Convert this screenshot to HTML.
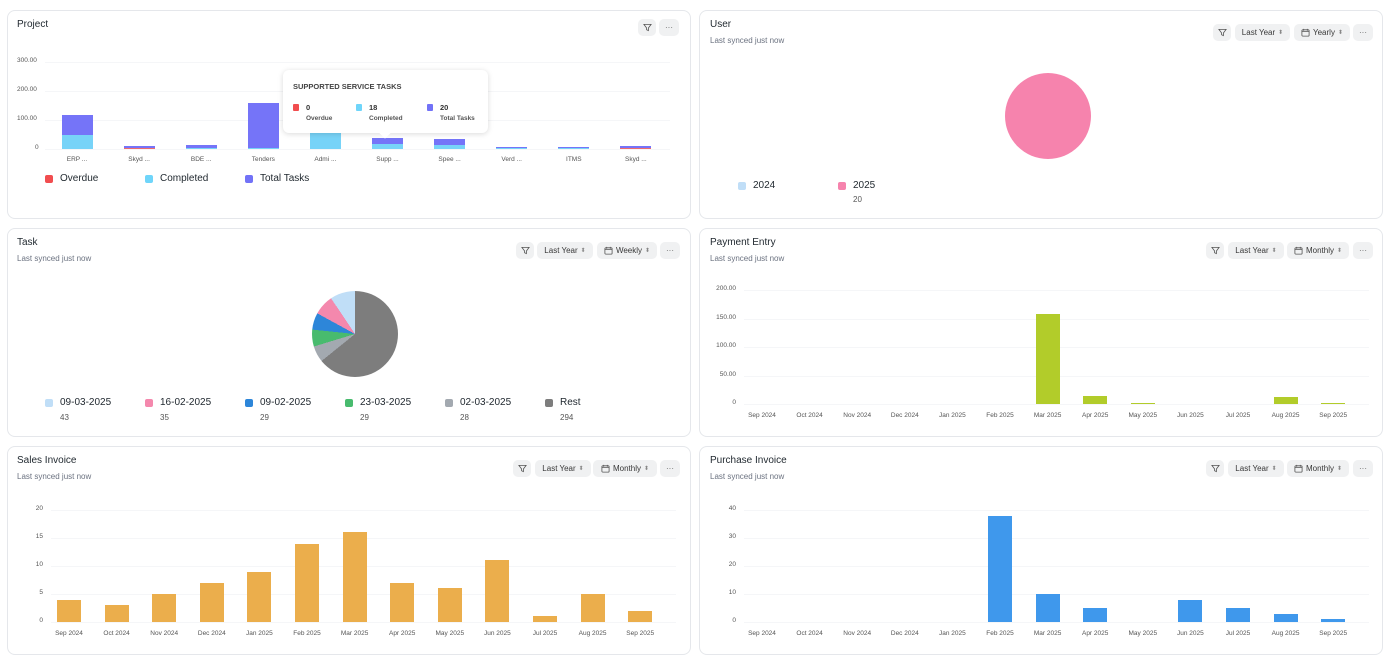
<!DOCTYPE html>
<html><head><meta charset="utf-8"><style>
*{box-sizing:border-box;margin:0;padding:0}
body{width:1390px;height:660px;background:#fff;font-family:"Liberation Sans",sans-serif;position:relative;overflow:hidden;color:#1f272e}
.card{position:absolute;border:1px solid #e5e7eb;border-radius:8px;background:#fff}
.t{position:absolute;font-size:10px;color:#1f272e}
.s{position:absolute;font-size:8px;color:#6b7280}
.btn{position:absolute;height:17px;background:#f0f1f2;border-radius:5px;font-size:8px;color:#383838;display:flex;align-items:center;justify-content:center;gap:3px}
.a{position:absolute;font-size:6.5px;color:#555;}
.g{position:absolute;height:1px;background:#f5f6f8}
.b{position:absolute}
.lg{position:absolute;font-size:10px;color:#1f272e;display:flex;align-items:center}
.lg i{display:inline-block;width:8px;height:8px;border-radius:2px;margin-right:7px}
</style></head><body>
<div class="card" style="left:7px;top:10px;width:684px;height:209px"></div>
<div class="card" style="left:699px;top:10px;width:684px;height:209px"></div>
<div class="card" style="left:7px;top:228px;width:684px;height:209px"></div>
<div class="card" style="left:699px;top:228px;width:684px;height:209px"></div>
<div class="card" style="left:7px;top:446px;width:684px;height:209px"></div>
<div class="card" style="left:699px;top:446px;width:684px;height:209px"></div>

<div class="t" style="left:17px;top:19px">Project</div>
<div class="t" style="left:710px;top:19px">User</div><div class="s" style="left:710px;top:36px">Last synced just now</div>
<div class="t" style="left:17px;top:237px">Task</div><div class="s" style="left:17px;top:254px">Last synced just now</div>
<div class="t" style="left:710px;top:237px">Payment Entry</div><div class="s" style="left:710px;top:254px">Last synced just now</div>
<div class="t" style="left:17px;top:455px">Sales Invoice</div><div class="s" style="left:17px;top:472px">Last synced just now</div>
<div class="t" style="left:710px;top:455px">Purchase Invoice</div><div class="s" style="left:710px;top:472px">Last synced just now</div>

<div id="root"></div>

<!-- tooltip -->
<div style="position:absolute;left:283px;top:70px;width:205px;height:63px;background:#fff;border-radius:6px;box-shadow:0 1px 6px rgba(0,0,0,.15)">
<div style="position:absolute;left:10px;top:12px;font-size:7.5px;font-weight:bold;color:#444">SUPPORTED SERVICE TASKS</div>
<div style="position:absolute;left:10px;top:34px;width:6px;height:7px;background:#f14d4f;border-radius:1px"></div>
<div style="position:absolute;left:23px;top:33px;font-size:7.5px;font-weight:bold;color:#333">0</div>
<div style="position:absolute;left:23px;top:45px;font-size:6.5px;font-weight:bold;color:#555">Overdue</div>
<div style="position:absolute;left:73px;top:34px;width:6px;height:7px;background:#6fd5fa;border-radius:1px"></div>
<div style="position:absolute;left:86px;top:33px;font-size:7.5px;font-weight:bold;color:#333">18</div>
<div style="position:absolute;left:86px;top:45px;font-size:6.5px;font-weight:bold;color:#555">Completed</div>
<div style="position:absolute;left:144px;top:34px;width:6px;height:7px;background:#7272f7;border-radius:1px"></div>
<div style="position:absolute;left:157px;top:33px;font-size:7.5px;font-weight:bold;color:#333">20</div>
<div style="position:absolute;left:157px;top:45px;font-size:6.5px;font-weight:bold;color:#555">Total Tasks</div>
<div style="position:absolute;left:98px;top:59px;width:8px;height:8px;background:#fff;transform:rotate(45deg)"></div>
</div>

<!-- pies -->
<div style="position:absolute;left:1005px;top:73px;width:86px;height:86px;border-radius:50%;background:#f683ad"></div>
<div style="position:absolute;left:312px;top:291px;width:86px;height:86px;border-radius:50%;background:conic-gradient(#7d7d7d 0deg 231.1deg,#a3a9b0 231.1deg 253.1deg,#48bb6e 253.1deg 275.9deg,#2d86d9 275.9deg 298.7deg,#f488ad 298.7deg 326.2deg,#c0def7 326.2deg 360deg)"></div>

<script>
const R=document.getElementById('root');let h='';
function add(s){h+=s}
function fil(x,y){return `<div class="btn" style="left:${x}px;top:${y}px;width:18px"><svg width="9" height="9" viewBox="0 0 10 10"><path d="M1 1.5h8L6 5.5v3L4 7.5v-2z" fill="none" stroke="#555" stroke-width="0.9"/></svg></div>`}
function more(x,y){return `<div class="btn" style="left:${x}px;top:${y}px;width:20px;color:#666">···</div>`}
function sel(x,y,w,txt,cal){return `<div class="btn" style="left:${x}px;top:${y}px;width:${w}px">${cal?'<svg width="9" height="9" viewBox="0 0 10 10"><rect x="1" y="2" width="8" height="7" rx="1" fill="none" stroke="#555" stroke-width="0.9"/><path d="M1 4h8M3 1v2M7 1v2" stroke="#555" stroke-width="0.9"/></svg>':''}${txt} <span style="font-size:6px;color:#888">⬍</span></div>`}
add(fil(638,19)+more(659,19));
add(fil(1213,24)+sel(1235,24,55,'Last Year')+sel(1294,24,56,'Yearly',1)+more(1353,24));
add(fil(516,242)+sel(537,242,56,'Last Year')+sel(597,242,60,'Weekly',1)+more(660,242));
add(fil(1206,242)+sel(1228,242,56,'Last Year')+sel(1287,242,62,'Monthly',1)+more(1353,242));
add(fil(513,460)+sel(535,460,56,'Last Year')+sel(593,460,64,'Monthly',1)+more(660,460));
add(fil(1206,460)+sel(1228,460,56,'Last Year')+sel(1287,460,62,'Monthly',1)+more(1353,460));
[[300,62],[200,91],[100,120],[0,149]].forEach(([v,y])=>{add(`<div class="a" style="left:${v?17:35}px;top:${y-5}px">${v?v.toFixed(2):0}</div><div class="g" style="left:45px;width:625px;top:${y}px"></div>`)});
const pn=['ERP ...','Skyd ...','BDE ...','Tenders','Admi ...','Supp ...','Spee ...','Verd ...','ITMS','Skyd ...'];
const pd=[[0,47,118],[5,2,9],[0,5,14],[0,5,160],[0,100,100],[0,18,39],[0,14,35],[0,3,7],[0,2,7],[5,2,9]];
pd.forEach((d,i)=>{const c=77+i*62.1,x=c-15.5,k=0.29;
 add(`<div class="b" style="left:${x}px;width:31px;top:${149-d[2]*k}px;height:${d[2]*k}px;background:#7574f8"></div>`);
 if(d[1])add(`<div class="b" style="left:${x}px;width:31px;top:${149-d[1]*k}px;height:${d[1]*k}px;background:#77d3f8"></div>`);
 if(d[0])add(`<div class="b" style="left:${x}px;width:31px;top:${149-d[0]*k}px;height:${d[0]*k}px;background:#ef6a6e"></div>`);
 add(`<div class="a" style="left:${c-20}px;width:40px;text-align:center;top:156px">${pn[i]}</div>`);});
add(`<div class="lg" style="left:45px;top:173px"><i style="background:#f14d4f"></i>Overdue</div><div class="lg" style="left:145px;top:173px"><i style="background:#6fd5fa"></i>Completed</div><div class="lg" style="left:245px;top:173px"><i style="background:#7272f7"></i>Total Tasks</div>`);
add(`<div class="lg" style="left:738px;top:180px"><i style="background:#c0def7"></i>2024</div><div class="lg" style="left:838px;top:180px"><i style="background:#f683ad"></i>2025</div><div class="s" style="left:853px;top:195px;color:#555">20</div>`);
const tl=[['09-03-2025','#c0def7',43],['16-02-2025','#f488ad',35],['09-02-2025','#2d86d9',29],['23-03-2025','#48bb6e',29],['02-03-2025','#a3a9b0',28],['Rest','#7d7d7d',294]];
tl.forEach((t,i)=>{const x=45+i*100;add(`<div class="lg" style="left:${x}px;top:397px"><i style="background:${t[1]}"></i>${t[0]}</div><div class="s" style="left:${x+15}px;top:413px;color:#555">${t[2]}</div>`)});
const mo=['Sep 2024','Oct 2024','Nov 2024','Dec 2024','Jan 2025','Feb 2025','Mar 2025','Apr 2025','May 2025','Jun 2025','Jul 2025','Aug 2025','Sep 2025'];
function chart(x0,ticks,zeroY,step,unit,vals,col,fmt){
 ticks.forEach((v,i)=>{const y=zeroY-i*step;const s=fmt?(v?v.toFixed(2):'0'):String(v);add(`<div class="a" style="left:${x0-62}px;width:36px;text-align:right;top:${y-5}px">${s}</div><div class="g" style="left:${x0-18}px;width:625px;top:${y}px"></div>`)});
 mo.forEach((m,i)=>{const c=x0+i*47.6;add(`<div class="a" style="left:${c-20}px;width:40px;text-align:center;top:${zeroY+8}px">${m}</div>`);
  const v=vals[i];if(v){const hh=v*unit;add(`<div class="b" style="left:${c-12}px;width:24px;top:${zeroY-hh}px;height:${hh}px;background:${col}"></div>`)}});
}
chart(762,[0,50,100,150,200],404,28.5,0.57,[0,0,0,0,0,0,158,14,1,0,0,12,1],'#b2cc2a',1);
chart(69,[0,5,10,15,20],622,28,5.6,[4,3,5,7,9,14,16,7,6,11,1,5,2],'#ebae4c',0);
chart(762,[0,10,20,30,40],622,28,2.8,[0,0,0,0,0,38,10,5,0,8,5,3,1],'#3f98ec',0);
R.innerHTML=h;
</script>
</body></html>
